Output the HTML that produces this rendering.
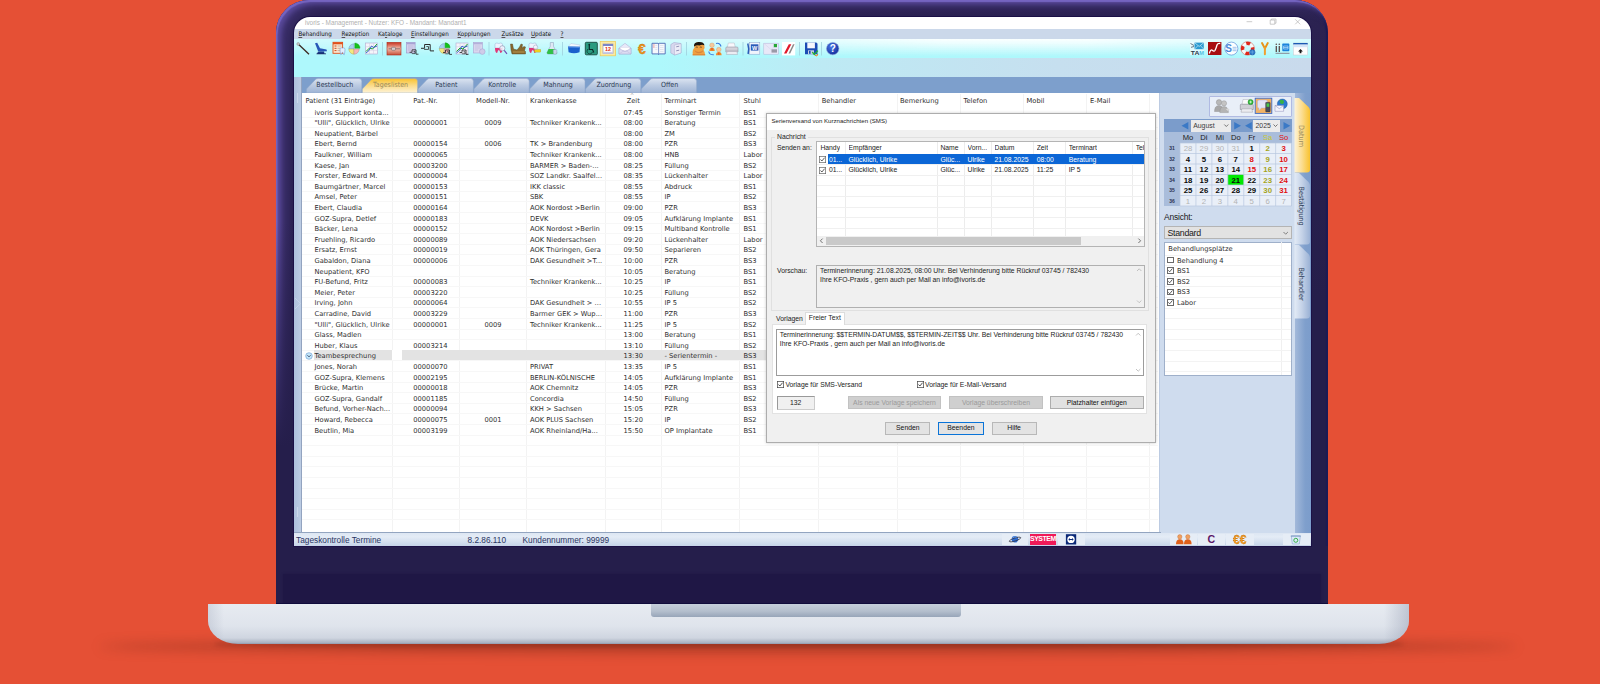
<!DOCTYPE html>
<html lang="de"><head><meta charset="utf-8"><title>ivoris - Management</title>
<style>
html,body{margin:0;padding:0}
body{width:1600px;height:684px;overflow:hidden;position:relative;background:#e55035;font-family:"Liberation Sans",sans-serif;}
.abs,.abs div{position:absolute;box-sizing:border-box;white-space:nowrap}
.t{font-family:"DejaVu Sans","Liberation Sans",sans-serif;font-size:6.72px;color:#303030;line-height:10px;height:10px}
.a{font-family:"Liberation Sans",sans-serif;font-size:6.8px;color:#222;line-height:10px;height:10px}
.c{text-align:center}
u{text-decoration-thickness:0.5px;text-underline-offset:0.6px;text-decoration-color:#555}
.m{font-family:"DejaVu Sans Condensed","DejaVu Sans",sans-serif;font-size:6.2px;color:#111}
</style></head><body>

<div class="abs" style="left:0;top:0;width:1600px;height:684px">
<div style="left:100px;top:640px;width:1416px;height:13px;border-radius:50%;background:rgba(120,40,24,.45);filter:blur(6px)"></div>
<div style="left:215px;top:641px;width:1188px;height:6px;border-radius:40%;background:rgba(110,35,20,.55);filter:blur(2.5px)"></div>
<div style="left:276.2px;top:0;width:1051.4px;height:604px;border-radius:33px 33px 0 0;background:linear-gradient(#2c2352 0,#2a2150 60px,#251e4b 300px);box-shadow:inset 1.5px 2px 1px #7564c0,inset 5px 4px 5px #5a4a9c,inset 13px 8px 10px #3b2f6b,inset -2px 0 1px #1c1b55"></div>
<div style="left:276.2px;top:80px;width:16.6px;height:470px;background:linear-gradient(rgba(37,30,75,0) 0,rgba(37,30,75,0) 30%,rgba(37,30,75,1) 78%)"></div>
<div style="left:276.2px;top:546px;width:1051.4px;height:59px;background:#251e4b"></div>
<div style="left:283px;top:574px;width:1038px;height:30px;background:#1f1745;box-shadow:0 0 2px #1f1745"></div>
<div style="left:276.2px;top:602.6px;width:1051.4px;height:1.2px;background:#100c3c"></div>
<div style="left:292.8px;top:15.8px;width:1019.4px;height:531px;border-radius:17px 17px 0 0;background:#1b1046"></div>
<div style="left:208px;top:603.6px;width:1200.6px;height:40.4px;border-radius:0 0 30px 30px / 0 0 23px 23px;background:linear-gradient(#e7ebf1 0,#dfe4ec 55%,#cfd5e0 85%,#a9b1c1 97%,#8f98ab 100%)"></div>
<div style="left:208px;top:603.6px;width:1200.6px;height:40.4px;border-radius:0 0 30px 30px / 0 0 23px 23px;background:linear-gradient(90deg,rgba(120,130,155,.2) 0,rgba(120,130,155,0) 16px,rgba(120,130,155,0) 1176px,rgba(120,130,155,.35) 100%)"></div>
<div style="left:651px;top:604px;width:310px;height:13px;border-radius:0 0 3px 3px;background:linear-gradient(#c6cfdb,#b4bfcd 55%,#97a5b9)"></div>
</div>
<div class="abs" style="left:0;top:0;width:1600px;height:684px;clip-path:inset(17px 289px 138px 294px round 16px 16px 0 0)">
<div style="left:0;top:0;width:1600px;height:684px;filter:blur(0.35px)">
<div style="left:294px;top:17px;width:1017px;height:529px;background:#cfdcee"></div>
<div style="left:294px;top:17px;width:1017px;height:12px;background:#fff"></div>
<div class="a" style="left:305px;top:17.5px;font-size:6.4px;color:#b0b0b0">ivoris - Management - Nutzer: KFO - Mandant: Mandant1</div>
<div style="left:294px;top:29px;width:1017px;height:10px;background:#cbd8ea"></div>
<div class="t m" style="left:298.4px;top:29px"><u>B</u>ehandlung</div>
<div class="t m" style="left:341.6px;top:29px"><u>R</u>ezeption</div>
<div class="t m" style="left:378px;top:29px">Ka<u>t</u>aloge</div>
<div class="t m" style="left:411px;top:29px"><u>E</u>instellungen</div>
<div class="t m" style="left:457.5px;top:29px"><u>K</u>opplungen</div>
<div class="t m" style="left:501.5px;top:29px"><u>Z</u>usätze</div>
<div class="t m" style="left:531px;top:29px"><u>U</u>pdate</div>
<div class="t m" style="left:560.5px;top:29px"><u>?</u></div>
<div style="left:294px;top:39px;width:1017px;height:38px;background:linear-gradient(90deg,#aef8fc 0,#aef8fc 36%,#bdeaf4 52%,#c6dfef 75%,#c9daec 100%)"></div>
<div style="left:294px;top:38.6px;width:1017px;height:19.4px;background:#aef8fc"></div>
<div style="left:294px;top:38.6px;width:1017px;height:19.4px;background:linear-gradient(rgba(255,255,255,.95) 0,rgba(255,255,255,.75) 25%,rgba(255,255,255,0) 92%);-webkit-mask-image:linear-gradient(90deg,rgba(0,0,0,.45) 0,rgba(0,0,0,.5) 40%,#000 64%,#000 78%,rgba(0,0,0,.55) 100%);mask-image:linear-gradient(90deg,rgba(0,0,0,.45) 0,rgba(0,0,0,.5) 40%,#000 64%,#000 78%,rgba(0,0,0,.55) 100%)"></div>
<svg style="position:absolute;left:294px;top:39px" width="1017" height="20" viewBox="294 39 1017 20">
<defs><linearGradient id="rdg" x1="0" y1="0" x2="0" y2="1"><stop offset="0" stop-color="#c8321e"/><stop offset="0.5" stop-color="#f0beae"/><stop offset="1" stop-color="#c85038"/></linearGradient><radialGradient id="hg" cx="0.4" cy="0.35" r="0.7"><stop offset="0" stop-color="#4a78e8"/><stop offset="1" stop-color="#102a98"/></radialGradient></defs>
<rect x="382.0" y="42" width="0.8" height="13.5" fill="#9fd0dc"/>
<rect x="488.6" y="42" width="0.8" height="13.5" fill="#9fd0dc"/>
<rect x="562.1" y="42" width="0.8" height="13.5" fill="#9fd0dc"/>
<rect x="686.1" y="42" width="0.8" height="13.5" fill="#9fd0dc"/>
<rect x="742.6" y="42" width="0.8" height="13.5" fill="#9fd0dc"/>
<rect x="799.0" y="42" width="0.8" height="13.5" fill="#9fd0dc"/>
<rect x="821.2" y="42" width="0.8" height="13.5" fill="#9fd0dc"/>
<path d="M298.2 44 L309 54.2" stroke="#3a2820" stroke-width="1.3"/><circle cx="298.2" cy="44" r="1.4" fill="#c8c8c8" stroke="#777" stroke-width="0.4"/>
<path d="M315 43.2 L317.2 42.8 L320 48.2 L326.5 49.6 L327 51.2 L320.5 51.6 L318 51 Z" fill="#2858b8"/><path d="M318 51.5 L324 51.5 L324.5 54 L317 54 Z" fill="#1a3a88"/><path d="M316.5 53.8 h9.5" stroke="#1a2a60" stroke-width="0.8"/>
<rect x="333" y="42.3" width="9.6" height="11" fill="#fbe8d0" stroke="#e0501a" stroke-width="0.9"/><rect x="333" y="42.3" width="9.6" height="2" fill="#e0501a"/><path d="M334.5 46 h2 M334.5 48.3 h2 M334.5 50.6 h2" stroke="#d04a18" stroke-width="1"/><path d="M337.5 46 h4 M337.5 48.3 h3 M337.5 50.6 h2.5" stroke="#b09080" stroke-width="0.6"/>
<path d="M340 49 Q340 47.8 341.3 47.8 Q342.4 48.4 343.5 47.8 Q345 47.8 345 49.5 Q345 52 344.2 54.8 Q343.4 55 343.2 52.8 Q342.5 52 341.8 52.8 Q341.6 55 340.8 54.8 Q340 52 340 49Z" fill="#e4eefc" stroke="#6a8ac8" stroke-width="0.5"/>
<path d="M354 49 V43.8 A5.2 5.2 0 0 0 348.8 49Z" fill="#a8d0f0" stroke="#6a8ab0" stroke-width="0.4"/><path d="M354 49 H348.8 A5.2 5.2 0 0 0 354 54.2Z" fill="#f5e880" stroke="#a09a50" stroke-width="0.4"/><path d="M354 49 V54.2 A5.2 5.2 0 0 0 359.2 49Z" fill="#f5b8b8" stroke="#b08080" stroke-width="0.4"/><path d="M354.8 48.2 H360.0 A5.2 5.2 0 0 0 354.8 43.0Z" fill="#12c418" stroke="#0a8a10" stroke-width="0.4"/>
<rect x="365.5" y="43" width="12" height="11" fill="#f4f4fa" stroke="#b0a8d0" stroke-width="0.6"/><path d="M365.5 46.7 h12 M365.5 50.4 h12 M369.5 43 v11 M373.5 43 v11" stroke="#d0c8e0" stroke-width="0.5"/><path d="M366.0 51.5 L369.5 48 L372.5 49 L377.0 44" fill="none" stroke="#18a828" stroke-width="1"/><path d="M366.0 53 L369.0 50.5 L371.5 46 L373.5 47.5 L377.0 46" fill="none" stroke="#2858c8" stroke-width="0.9"/>
<rect x="387" y="42.4" width="14" height="12.6" fill="url(#rdg)" stroke="#b02a18" stroke-width="0.6"/><rect x="391.5" y="47.3" width="4" height="3" rx="0.8" fill="#d8d0d0" stroke="#6a5a5a" stroke-width="0.5"/><path d="M388.5 48.8 h3 M395.5 48.8 h4.5" stroke="#6a5050" stroke-width="0.7"/>
<rect x="406.5" y="42.5" width="8.6" height="10.5" fill="#d4d0ec" stroke="#9a94c8" stroke-width="0.6"/><rect x="406.5" y="42.5" width="8.6" height="1.8" fill="#a8a2d4"/><path d="M408 46 h5.5 M408 48 h5.5 M408 50 h3" stroke="#a8a4cc" stroke-width="0.5"/>
<path d="M409.55 52.290000000000006 h2.4699999999999998 v-2.4699999999999998 h3.9899999999999998 v4.369999999999999 h2.4699999999999998" fill="none" stroke="#222" stroke-width="0.8075"/><path d="M413.54 51.53 h1.52 v2.09 h-3.23" fill="none" stroke="#222" stroke-width="0.6649999999999999"/>
<path d="M421 48.3 h3.6 v-3.8 h5.6 v6.4 h3.8" fill="none" stroke="#2a2a2a" stroke-width="1"/><path d="M426.3 46.6 h2.2 v2.8 h-4.4" fill="none" stroke="#2a2a2a" stroke-width="0.8"/>
<path d="M444.3 48.6 V43.6 A5 5 0 0 0 439.3 48.6Z" fill="#a8d0f0" stroke="#6a8ab0" stroke-width="0.4"/><path d="M444.3 48.6 H439.3 A5 5 0 0 0 444.3 53.6Z" fill="#f5e880" stroke="#a09a50" stroke-width="0.4"/><path d="M444.3 48.6 V53.6 A5 5 0 0 0 449.3 48.6Z" fill="#f5b8b8" stroke="#b08080" stroke-width="0.4"/><path d="M445.1 47.800000000000004 H450.1 A5 5 0 0 0 445.1 42.800000000000004Z" fill="#12c418" stroke="#0a8a10" stroke-width="0.4"/>
<path d="M443.05 52.489999999999995 h2.4699999999999998 v-2.4699999999999998 h3.9899999999999998 v4.369999999999999 h2.4699999999999998" fill="none" stroke="#222" stroke-width="0.8075"/><path d="M447.04 51.73 h1.52 v2.09 h-3.23" fill="none" stroke="#222" stroke-width="0.6649999999999999"/>
<rect x="456" y="43" width="12" height="11" fill="#f4f4fa" stroke="#b0a8d0" stroke-width="0.6"/><path d="M456 46.7 h12 M456 50.4 h12 M460 43 v11 M464 43 v11" stroke="#d0c8e0" stroke-width="0.5"/><path d="M456.5 51.5 L460 48 L463 49 L467.5 44" fill="none" stroke="#18a828" stroke-width="1"/><path d="M456.5 53 L459.5 50.5 L462 46 L464 47.5 L467.5 46" fill="none" stroke="#2858c8" stroke-width="0.9"/>
<path d="M459.55 52.489999999999995 h2.4699999999999998 v-2.4699999999999998 h3.9899999999999998 v4.369999999999999 h2.4699999999999998" fill="none" stroke="#222" stroke-width="0.8075"/><path d="M463.54 51.73 h1.52 v2.09 h-3.23" fill="none" stroke="#222" stroke-width="0.6649999999999999"/>
<rect x="473.4" y="42.5" width="9" height="10.5" fill="#d9d6ee" stroke="#aaa6d2" stroke-width="0.6"/><rect x="473.4" y="42.5" width="9" height="1.8" fill="#b4b0da"/><path d="M475 46 h5.5 M475 48 h5.5 M475 50 h3" stroke="#b4b0d4" stroke-width="0.5"/><circle cx="482.3" cy="51.6" r="2.8" fill="#cfcce8" stroke="#a29ecf" stroke-width="0.5"/>
<path d="M495 44.5 Q495 43 496.875 43 Q498.75 44 500.625 43 Q502.5 43 502.5 44.5 V48.0 H495Z" fill="#eef4ff" stroke="#8aa0c8" stroke-width="0.4"/><path d="M495 48.0 H502.5 Q502.5 53 500.4 53 Q499.5 50.0 498.75 50.0 Q498.0 50.0 497.1 53 Q495 53 495 48.0Z" fill="#e03878"/>
<circle cx="502.3" cy="48.3" r="2.6" fill="#f4f8ff" fill-opacity="0.8" stroke="#8a8aa8" stroke-width="0.6"/><path d="M504.2 50.4 L507 53.8" stroke="#6a4ab0" stroke-width="1.1"/>
<path d="M510.5 44 L512.5 44 L513.5 49 L517 50 L519.5 47 L521 44 L522.5 44.5 L522 48 L524 46.5 L525.5 47 L524.5 50.5 L525.5 51.5 L525.5 54 L512 54 L511 50Z" fill="#8a6a2e" stroke="#4a3818" stroke-width="0.4"/><path d="M513 52 h11.5" stroke="#c8a860" stroke-width="0.7"/>
<path d="M529 44.5 Q529 43 530.875 43 Q532.75 44 534.625 43 Q536.5 43 536.5 44.5 V48.0 H529Z" fill="#eef4ff" stroke="#8aa0c8" stroke-width="0.4"/><path d="M529 48.0 H536.5 Q536.5 53 534.4 53 Q533.5 50.0 532.75 50.0 Q532.0 50.0 531.1 53 Q529 53 529 48.0Z" fill="#e03878"/>
<rect x="534.5" y="49.5" width="6.2" height="2.6" fill="#f0d020" stroke="#a08a10" stroke-width="0.3"/><circle cx="535.6" cy="47.2" r="2.2" fill="#f4f8ff" fill-opacity="0.8" stroke="#9a9ab8" stroke-width="0.5"/>
<path d="M550.3 42.5 h3.2 v3.8 l3.3 6.2 q0.4 1.6 -1.4 1.6 h-7 q-1.8 0 -1.4 -1.6 l3.3 -6.2Z" fill="#dfe8f4" stroke="#8a9ab8" stroke-width="0.5"/><path d="M548.6 49 h6.6 l1.6 3.5 q0.4 1.6 -1.4 1.6 h-7 q-1.8 0 -1.4 -1.6Z" fill="#30c048"/><rect x="553.3" y="49.5" width="3.6" height="4.6" rx="1" fill="#c8d4ec" stroke="#8a9ac0" stroke-width="0.4"/>
<path d="M568.3 46.5 L571 43.5 L580 45 L580 47Z" fill="#f4f8ff" stroke="#a8b8d8" stroke-width="0.4"/><path d="M568 46.5 L580 46.8 L579.5 52.3 Q574 54.3 568.6 52.3Z" fill="#1a60cc"/><path d="M568.3 47 L579.8 47.3" stroke="#6aa0f0" stroke-width="0.8"/>
<rect x="585.3" y="42.3" width="12" height="12.5" rx="1" fill="#2a9a80" stroke="#1a4a40" stroke-width="0.9"/><path d="M589.3 44.5 v5 h3.2 l1.3 3" fill="none" stroke="#0a2a28" stroke-width="1.2"/><circle cx="589.3" cy="44.6" r="0.9" fill="#0a2a28"/><path d="M588 49 a2.8 2.8 0 1 0 4.5 3" fill="none" stroke="#0a2a28" stroke-width="0.7"/>
<rect x="600.2" y="41.6" width="15.4" height="14.2" fill="#fbeaa4" stroke="#f0c850" stroke-width="0.7"/><rect x="603" y="44" width="10" height="9.6" fill="#fff" stroke="#8a8ab8" stroke-width="0.6"/><rect x="603" y="44" width="10" height="2" fill="#7a86c8"/><rect x="603" y="51.8" width="10" height="1.8" fill="#c8cce8"/>
<text x="608" y="51.2" font-family="Liberation Sans,sans-serif" font-size="5.4" font-weight="bold" fill="#e02a10" text-anchor="middle">12</text>
<path d="M619 48 L625 43.3 L631 48 V54 H619Z" fill="#e8e8f8" stroke="#a8a8d0" stroke-width="0.5"/><path d="M620.3 47.5 h9.4 v3 h-9.4Z" fill="#fff" stroke="#c8c8e0" stroke-width="0.3"/><path d="M619 48.3 L625 51.8 L631 48.3 V54 H619Z" fill="#dcdcf2" stroke="#a8a8d0" stroke-width="0.5"/><path d="M619 54 L623.8 50.8 M631 54 L626.2 50.8" stroke="#b0b0d4" stroke-width="0.4"/>
<text x="641.8" y="54" font-family="Liberation Sans,sans-serif" font-size="14" font-weight="bold" fill="#f09418" stroke="#c06a08" stroke-width="0.3" text-anchor="middle">€</text>
<path d="M652 43.3 h6 q0.6 0 0.6 0.8 q0 -0.8 0.6 -0.8 h6 v10.6 h-6 q-0.6 0 -0.6 0.6 q0 -0.6 -0.6 -0.6 h-6Z" fill="#f6f8fc" stroke="#4a6ab4" stroke-width="0.9"/><path d="M658.6 44 v10.3" stroke="#4a6ab4" stroke-width="0.7"/><path d="M653.3 45 h1.2 M653.3 47 h1.2" stroke="#e03030" stroke-width="0.7"/><path d="M655.3 45.5 h2 M655.3 47.5 h2 M655.3 49.5 h2 M660 45.5 h3.5 M660 47.5 h3.5 M660 49.5 h3.5 M660 51.5 h3.5" stroke="#c0c8dc" stroke-width="0.4"/>
<path d="M670.8 44.5 L674 42.5 L681 43.5 V53 L674.5 55 L670.8 53Z" fill="#d8d8ee" stroke="#a0a0c8" stroke-width="0.5"/><path d="M674.3 45 L681 43.7 V53 L674.5 55Z" fill="#ececf8" stroke="#a0a0c8" stroke-width="0.4"/><path d="M676.2 46.8 l3 -0.6 M676.2 50.8 l3 -0.6" stroke="#8888b0" stroke-width="0.9"/>
<path d="M692.8 54.5 Q692 50 694.5 47.5 Q693.5 43 698 42.3 Q703.5 41.8 704.3 45.5 Q705.3 48 703.5 50 Q705.3 52.5 705 54.5Z" fill="#f0a040"/><path d="M694 46.5 Q693.5 42.3 698.3 42 Q703.8 41.6 704.5 45.3 Q702 44.3 699.5 45.5 Q697 44.5 694 46.5Z" fill="#1a1410"/><path d="M695.8 47.3 q1 -0.6 2 0 M699.8 47.3 q1 -0.6 2 0" stroke="#222" stroke-width="0.6" fill="none"/><path d="M694.5 50 Q698.5 54 703.5 50 Q702.5 53.3 698.8 53.3 Q695.5 53.3 694.5 50Z" fill="#d8843a"/><path d="M692.6 54.8 h12.6" stroke="#e87a1a" stroke-width="1.2"/>
<circle cx="712" cy="45.2" r="2.3" fill="#f6c89a" stroke="#c08850" stroke-width="0.3"/><path d="M709.3 51 q0 -3.3 2.7 -3.3 q2.7 0 2.7 3.3Z" fill="#f08a2a"/><circle cx="718.8" cy="49.6" r="2.3" fill="#f6c89a" stroke="#c08850" stroke-width="0.3"/><path d="M716 55.3 q0 -3.3 2.8 -3.3 q2.8 0 2.8 3.3Z" fill="#f08a2a"/><path d="M716 43.5 q4 -1 5 3" fill="none" stroke="#3a7ae0" stroke-width="1.1"/><path d="M708.8 51.5 q0.5 3.5 5 3.3" fill="none" stroke="#3a7ae0" stroke-width="1.1"/><path d="M712 48 v2.3 M718.8 52.5 v2.3" stroke="#e02020" stroke-width="0.6"/>
<path d="M728.3 43 h6 l1 4.5 h-8Z" fill="#f8f8fc" stroke="#a8a8b8" stroke-width="0.4"/><path d="M725.8 48 q0 -1 1 -1 h10.2 q1 0 1 1 v4 h-12.2Z" fill="#d4d4dc" stroke="#8a8a98" stroke-width="0.5"/><path d="M727.2 51.5 h9.6 l0.8 3 h-11.2Z" fill="#ececf2" stroke="#9a9aa8" stroke-width="0.4"/><path d="M726 50.3 h12" stroke="#a0a0ac" stroke-width="0.5"/>
<rect x="749.3" y="42.6" width="10.5" height="11.6" fill="#f0f4fc" stroke="#8aa0cc" stroke-width="0.5"/><rect x="750.8" y="44.3" width="7.6" height="6.3" fill="#2a5cb8"/><text x="754.6" y="49.8" font-family="Liberation Sans,sans-serif" font-size="5.6" font-weight="bold" fill="#fff" text-anchor="middle">W</text><path d="M747.8 43.5 q1.6 5 0.3 10.5" stroke="#2a5cb8" stroke-width="1.5" fill="none"/>
<rect x="763.8" y="43.2" width="14.6" height="11" fill="#e8e8f8" stroke="#b4b4d8" stroke-width="0.5"/><path d="M764 43.5 L771 49.5 L778.2 43.5" fill="none" stroke="#d0d0e8" stroke-width="0.5"/><rect x="773.8" y="44" width="3.2" height="3.2" fill="#28a838"/><rect x="771.5" y="49.3" width="5.5" height="3.3" fill="#9a9aa8"/>
<rect x="782" y="42" width="13.2" height="13.4" fill="#fff"/><path d="M784 53.5 L788.8 44.3 H791.3 L786.5 53.5Z" fill="#e0182a"/><path d="M788.5 53.5 L793 44.3 H794.6 L790.2 53.5Z" fill="#8a8a8a"/>
<path d="M805 42.5 h11.3 l1.2 1.2 v10.6 h-12.5Z" fill="#1a4cb4"/><rect x="807.3" y="42.5" width="7.6" height="5.8" fill="#f4f6fc"/><rect x="808" y="50.3" width="6" height="4" fill="#c8d0e4"/><rect x="809" y="50.8" width="1.6" height="3" fill="#1a4cb4"/><path d="M812.3 52 l2 2.6 l3.6 -4" fill="none" stroke="#28b030" stroke-width="1.3"/><path d="M815 55.2 l1.8 0.8 l1 -2" fill="none" stroke="#f08020" stroke-width="1"/>
<circle cx="832.7" cy="48.6" r="6.2" fill="url(#hg)" stroke="#8aa0d8" stroke-width="0.6"/><text x="832.7" y="52.2" font-family="Liberation Sans,sans-serif" font-size="10" font-weight="bold" fill="#fff" text-anchor="middle">?</text>
<rect x="1190" y="42" width="14" height="13" fill="#f4fbfd" fill-opacity="0.6"/><rect x="1194.5" y="42.6" width="9.3" height="6.6" fill="#2a9ad0"/><path d="M1194.5 42.6 L1199.2 46.5 L1203.8 42.6 M1194.5 49.2 L1198 45.6 M1203.8 49.2 L1200.4 45.6" stroke="#e8f6fc" stroke-width="0.6" fill="none"/><path d="M1190.5 43.5 l3.5 2 M1191 47.3 l3 -0.8" stroke="#5a6a78" stroke-width="0.9"/>
<text x="1190.8" y="55" font-family="Liberation Sans,sans-serif" font-size="5.6" font-weight="bold" fill="#2a3a48" textLength="8.6" lengthAdjust="spacingAndGlyphs">TA</text><text x="1199.3" y="55" font-family="Liberation Sans,sans-serif" font-size="5.6" font-weight="bold" fill="#4ac0e0">M</text>
<rect x="1208" y="42" width="13.4" height="13" fill="#a80e10"/><path d="M1209.3 53.5 q1.3 -4.5 3 -3.3 q1.8 1.8 2.8 0 q1 -2 2 -5.5 q0.8 -1.8 3.2 -1.2" fill="none" stroke="#fff" stroke-width="1.3"/>
<circle cx="1231.4" cy="48.6" r="6.5" fill="#fdfeff" stroke="#5a92da" stroke-width="0.7"/><text x="1228.6" y="52.3" font-family="Liberation Sans,sans-serif" font-size="10" font-weight="bold" fill="#4a8ad8" text-anchor="middle">S</text><path d="M1232.6 47.3 h4 M1232.6 49 h4 M1232.6 50.7 h4" stroke="#7aaae4" stroke-width="0.7"/>
<circle cx="1247.6" cy="48.4" r="5" fill="none" stroke="#f8f8f8" stroke-width="3.4"/><circle cx="1247.6" cy="48.4" r="5" fill="none" stroke="#e0281a" stroke-width="3.4" stroke-dasharray="3.93 3.93" stroke-dashoffset="1.96"/><circle cx="1247.6" cy="48.4" r="6.8" fill="none" stroke="#c82818" stroke-width="0.4"/><circle cx="1252.3" cy="52.3" r="2.8" fill="#2a78c8" stroke="#1a4a98" stroke-width="0.4"/><path d="M1250 52 h4.6 M1252.3 49.8 v5" stroke="#9ac8f0" stroke-width="0.4"/>
<path d="M1262 43 l2.9 5.5 l2.9 -5.5" fill="none" stroke="#e8941a" stroke-width="1.9" stroke-linecap="round"/><path d="M1264.9 48 v6.3" stroke="#f0a030" stroke-width="2" stroke-linecap="round"/>
<path d="M1276.3 46 v6 M1279.3 46 v6" stroke="#5a4a48" stroke-width="1.3"/><circle cx="1276.3" cy="44.3" r="0.8" fill="#5a4a48"/><circle cx="1279.3" cy="44.3" r="0.8" fill="#5a4a48"/><rect x="1282.3" y="43.6" width="7" height="7.6" rx="0.6" fill="#1a84dc"/><path d="M1283.6 46 h4.4 v3 h-4.4Z M1283.6 47.5 h4.4" fill="none" stroke="#d0ecff" stroke-width="0.6"/><path d="M1275.5 53.3 h14" stroke="#7a6a78" stroke-width="0.8"/>
<rect x="1293.3" y="43" width="14.4" height="12" fill="#fdfdfd" stroke="#c4c8d0" stroke-width="0.5"/><rect x="1293.3" y="43" width="14.4" height="1.6" fill="#1a5ab4"/><rect x="1293.3" y="44.6" width="14.4" height="2.6" fill="#d4e6f8"/><path d="M1300.5 49 l2.4 2.4 h-1.5 v1.8 h-1.8 v-1.8 h-1.5Z" fill="#1a1a1a"/>
</svg>
<div style="left:294px;top:77px;width:1017px;height:16px;background:#7d9fcc"></div>
<svg style="position:absolute;left:294px;top:77px" width="1017" height="16" viewBox="294 77 1017 16"><defs><linearGradient id="tg" x1="0" y1="0" x2="0" y2="1"><stop offset="0" stop-color="#dbe4f1"/><stop offset="0.45" stop-color="#bccbe2"/><stop offset="1" stop-color="#9db3d4"/></linearGradient><linearGradient id="ta" x1="0" y1="0" x2="0" y2="1"><stop offset="0" stop-color="#f9c22e"/><stop offset="0.5" stop-color="#fbdc8c"/><stop offset="1" stop-color="#fdf3d8"/></linearGradient></defs>
<path d="M306.5 93 L306.5 89 L315.5 79.5 Q316.5 78.5 318.5 78.5 L358.8 78.5 Q361.8 78.5 361.8 81.5 L361.8 93 Z" fill="url(#tg)" stroke="#8ea6c9" stroke-width="0.5"/>
<path d="M362.3 93 L362.3 89 L371.3 79.5 Q372.3 78.5 374.3 78.5 L414.6 78.5 Q417.6 78.5 417.6 81.5 L417.6 93 Z" fill="url(#ta)" stroke="#8ea6c9" stroke-width="0.5"/>
<path d="M418.1 93 L418.1 89 L427.1 79.5 Q428.1 78.5 430.1 78.5 L470.4 78.5 Q473.4 78.5 473.4 81.5 L473.4 93 Z" fill="url(#tg)" stroke="#8ea6c9" stroke-width="0.5"/>
<path d="M473.9 93 L473.9 89 L482.9 79.5 Q483.9 78.5 485.9 78.5 L526.2 78.5 Q529.2 78.5 529.2 81.5 L529.2 93 Z" fill="url(#tg)" stroke="#8ea6c9" stroke-width="0.5"/>
<path d="M529.7 93 L529.7 89 L538.7 79.5 Q539.7 78.5 541.7 78.5 L582.0 78.5 Q585.0 78.5 585.0 81.5 L585.0 93 Z" fill="url(#tg)" stroke="#8ea6c9" stroke-width="0.5"/>
<path d="M585.5 93 L585.5 89 L594.5 79.5 Q595.5 78.5 597.5 78.5 L637.8 78.5 Q640.8 78.5 640.8 81.5 L640.8 93 Z" fill="url(#tg)" stroke="#8ea6c9" stroke-width="0.5"/>
<path d="M641.3 93 L641.3 89 L650.3 79.5 Q651.3 78.5 653.3 78.5 L693.6 78.5 Q696.6 78.5 696.6 81.5 L696.6 93 Z" fill="url(#tg)" stroke="#8ea6c9" stroke-width="0.5"/>
</svg>
<div class="t m c" style="left:307.3px;top:80.4px;width:55px;font-size:7.05px;color:#2c3a55">Bestellbuch</div>
<div class="t m c" style="left:363.1px;top:80.4px;width:55px;font-size:7.05px;color:#9a8a5a">Tageslisten</div>
<div class="t m c" style="left:418.9px;top:80.4px;width:55px;font-size:7.05px;color:#2c3a55">Patient</div>
<div class="t m c" style="left:474.7px;top:80.4px;width:55px;font-size:7.05px;color:#2c3a55">Kontrolle</div>
<div class="t m c" style="left:530.5px;top:80.4px;width:55px;font-size:7.05px;color:#2c3a55">Mahnung</div>
<div class="t m c" style="left:586.3px;top:80.4px;width:55px;font-size:7.05px;color:#2c3a55">Zuordnung</div>
<div class="t m c" style="left:642.1px;top:80.4px;width:55px;font-size:7.05px;color:#2c3a55">Offen</div>
<div style="left:294px;top:77px;width:8px;height:456px;background:linear-gradient(90deg,#adc0dc,#bccce3);border-right:0.7px solid #93a4c0"></div>
<div style="left:302px;top:93px;width:858px;height:439px;background:#fff"></div>
<div style="left:391.5px;top:94px;width:1px;height:438px;background:#f3f3f3"></div>
<div style="left:459.0px;top:94px;width:1px;height:438px;background:#f3f3f3"></div>
<div style="left:526.0px;top:94px;width:1px;height:438px;background:#f3f3f3"></div>
<div style="left:605.0px;top:94px;width:1px;height:438px;background:#f3f3f3"></div>
<div style="left:660.5px;top:94px;width:1px;height:438px;background:#f3f3f3"></div>
<div style="left:739.2px;top:94px;width:1px;height:438px;background:#f3f3f3"></div>
<div style="left:817.5px;top:94px;width:1px;height:438px;background:#f3f3f3"></div>
<div style="left:896.5px;top:94px;width:1px;height:438px;background:#f3f3f3"></div>
<div style="left:959.5px;top:94px;width:1px;height:438px;background:#f3f3f3"></div>
<div style="left:1022.5px;top:94px;width:1px;height:438px;background:#f3f3f3"></div>
<div style="left:1085.5px;top:94px;width:1px;height:438px;background:#f3f3f3"></div>
<div style="left:1149.0px;top:94px;width:1px;height:438px;background:#f3f3f3"></div>
<div style="left:302px;top:116.50px;width:856px;height:1px;background:#f7f7f7"></div>
<div style="left:302px;top:127.10px;width:856px;height:1px;background:#f7f7f7"></div>
<div style="left:302px;top:137.70px;width:856px;height:1px;background:#f7f7f7"></div>
<div style="left:302px;top:148.30px;width:856px;height:1px;background:#f7f7f7"></div>
<div style="left:302px;top:158.90px;width:856px;height:1px;background:#f7f7f7"></div>
<div style="left:302px;top:169.50px;width:856px;height:1px;background:#f7f7f7"></div>
<div style="left:302px;top:180.10px;width:856px;height:1px;background:#f7f7f7"></div>
<div style="left:302px;top:190.70px;width:856px;height:1px;background:#f7f7f7"></div>
<div style="left:302px;top:201.30px;width:856px;height:1px;background:#f7f7f7"></div>
<div style="left:302px;top:211.90px;width:856px;height:1px;background:#f7f7f7"></div>
<div style="left:302px;top:222.50px;width:856px;height:1px;background:#f7f7f7"></div>
<div style="left:302px;top:233.10px;width:856px;height:1px;background:#f7f7f7"></div>
<div style="left:302px;top:243.70px;width:856px;height:1px;background:#f7f7f7"></div>
<div style="left:302px;top:254.30px;width:856px;height:1px;background:#f7f7f7"></div>
<div style="left:302px;top:264.90px;width:856px;height:1px;background:#f7f7f7"></div>
<div style="left:302px;top:275.50px;width:856px;height:1px;background:#f7f7f7"></div>
<div style="left:302px;top:286.10px;width:856px;height:1px;background:#f7f7f7"></div>
<div style="left:302px;top:296.70px;width:856px;height:1px;background:#f7f7f7"></div>
<div style="left:302px;top:307.30px;width:856px;height:1px;background:#f7f7f7"></div>
<div style="left:302px;top:317.90px;width:856px;height:1px;background:#f7f7f7"></div>
<div style="left:302px;top:328.50px;width:856px;height:1px;background:#f7f7f7"></div>
<div style="left:302px;top:339.10px;width:856px;height:1px;background:#f7f7f7"></div>
<div style="left:302px;top:349.70px;width:856px;height:1px;background:#f7f7f7"></div>
<div style="left:302px;top:360.30px;width:856px;height:1px;background:#f7f7f7"></div>
<div style="left:302px;top:370.90px;width:856px;height:1px;background:#f7f7f7"></div>
<div style="left:302px;top:381.50px;width:856px;height:1px;background:#f7f7f7"></div>
<div style="left:302px;top:392.10px;width:856px;height:1px;background:#f7f7f7"></div>
<div style="left:302px;top:402.70px;width:856px;height:1px;background:#f7f7f7"></div>
<div style="left:302px;top:413.30px;width:856px;height:1px;background:#f7f7f7"></div>
<div style="left:302px;top:423.90px;width:856px;height:1px;background:#f7f7f7"></div>
<div style="left:302px;top:434.50px;width:856px;height:1px;background:#f7f7f7"></div>
<div style="left:302px;top:445.10px;width:856px;height:1px;background:#f7f7f7"></div>
<div style="left:302px;top:455.70px;width:856px;height:1px;background:#f7f7f7"></div>
<div style="left:302px;top:466.30px;width:856px;height:1px;background:#f7f7f7"></div>
<div style="left:302px;top:476.90px;width:856px;height:1px;background:#f7f7f7"></div>
<div style="left:302px;top:487.50px;width:856px;height:1px;background:#f7f7f7"></div>
<div style="left:302px;top:498.10px;width:856px;height:1px;background:#f7f7f7"></div>
<div style="left:302px;top:508.70px;width:856px;height:1px;background:#f7f7f7"></div>
<div style="left:302px;top:519.30px;width:856px;height:1px;background:#f7f7f7"></div>
<div class="t" style="left:305.5px;top:96.1px">Patient (31 Einträge)</div>
<div class="t c" style="left:392px;top:96.1px;width:67px">Pat.-Nr.</div>
<div class="t c" style="left:459.5px;top:96.1px;width:67px">Modell-Nr.</div>
<div class="t" style="left:530px;top:96.1px">Krankenkasse</div>
<div class="t c" style="left:605.5px;top:96.1px;width:55.5px">Zeit</div>
<div class="t" style="left:664.5px;top:96.1px">Terminart</div>
<div class="t" style="left:743.5px;top:96.1px">Stuhl</div>
<div class="t" style="left:821.7px;top:96.1px">Behandler</div>
<div class="t" style="left:900px;top:96.1px">Bemerkung</div>
<div class="t" style="left:963.5px;top:96.1px">Telefon</div>
<div class="t" style="left:1026.5px;top:96.1px">Mobil</div>
<div class="t" style="left:1090px;top:96.1px">E-Mail</div>
<div class="t" style="left:630px;top:90px;font-size:5px;color:#999">^</div>
<div class="t" style="left:314.5px;top:107.60px">ivoris Support konta...</div>
<div class="t c" style="left:605.5px;top:107.60px;width:55.5px">07:45</div>
<div class="t" style="left:664.5px;top:107.60px">Sonstiger Termin</div>
<div class="t" style="left:743.5px;top:107.60px">BS1</div>
<div class="t" style="left:314.5px;top:118.20px">"Ulli", Glücklich, Ulrike</div>
<div class="t" style="left:413.3px;top:118.20px">00000001</div>
<div class="t c" style="left:459.5px;top:118.20px;width:67px">0009</div>
<div class="t" style="left:530px;top:118.20px">Techniker Krankenk...</div>
<div class="t c" style="left:605.5px;top:118.20px;width:55.5px">08:00</div>
<div class="t" style="left:664.5px;top:118.20px">Beratung</div>
<div class="t" style="left:743.5px;top:118.20px">BS1</div>
<div class="t" style="left:314.5px;top:128.80px">Neupatient, Bärbel</div>
<div class="t c" style="left:605.5px;top:128.80px;width:55.5px">08:00</div>
<div class="t" style="left:664.5px;top:128.80px">ZM</div>
<div class="t" style="left:743.5px;top:128.80px">BS2</div>
<div class="t" style="left:314.5px;top:139.40px">Ebert, Bernd</div>
<div class="t" style="left:413.3px;top:139.40px">00000154</div>
<div class="t c" style="left:459.5px;top:139.40px;width:67px">0006</div>
<div class="t" style="left:530px;top:139.40px">TK > Brandenburg</div>
<div class="t c" style="left:605.5px;top:139.40px;width:55.5px">08:00</div>
<div class="t" style="left:664.5px;top:139.40px">PZR</div>
<div class="t" style="left:743.5px;top:139.40px">BS3</div>
<div class="t" style="left:314.5px;top:150.00px">Faulkner, William</div>
<div class="t" style="left:413.3px;top:150.00px">00000065</div>
<div class="t" style="left:530px;top:150.00px">Techniker Krankenk...</div>
<div class="t c" style="left:605.5px;top:150.00px;width:55.5px">08:00</div>
<div class="t" style="left:664.5px;top:150.00px">HNB</div>
<div class="t" style="left:743.5px;top:150.00px">Labor</div>
<div class="t" style="left:314.5px;top:160.60px">Kaese, Jan</div>
<div class="t" style="left:413.3px;top:160.60px">00003200</div>
<div class="t" style="left:530px;top:160.60px">BARMER > Baden-...</div>
<div class="t c" style="left:605.5px;top:160.60px;width:55.5px">08:25</div>
<div class="t" style="left:664.5px;top:160.60px">Füllung</div>
<div class="t" style="left:743.5px;top:160.60px">BS2</div>
<div class="t" style="left:314.5px;top:171.20px">Forster, Edward M.</div>
<div class="t" style="left:413.3px;top:171.20px">00000004</div>
<div class="t" style="left:530px;top:171.20px">SOZ Landkr. Saalfel...</div>
<div class="t c" style="left:605.5px;top:171.20px;width:55.5px">08:35</div>
<div class="t" style="left:664.5px;top:171.20px">Lückenhalter</div>
<div class="t" style="left:743.5px;top:171.20px">Labor</div>
<div class="t" style="left:314.5px;top:181.80px">Baumgärtner, Marcel</div>
<div class="t" style="left:413.3px;top:181.80px">00000153</div>
<div class="t" style="left:530px;top:181.80px">IKK classic</div>
<div class="t c" style="left:605.5px;top:181.80px;width:55.5px">08:55</div>
<div class="t" style="left:664.5px;top:181.80px">Abdruck</div>
<div class="t" style="left:743.5px;top:181.80px">BS1</div>
<div class="t" style="left:314.5px;top:192.40px">Amsel, Peter</div>
<div class="t" style="left:413.3px;top:192.40px">00000151</div>
<div class="t" style="left:530px;top:192.40px">SBK</div>
<div class="t c" style="left:605.5px;top:192.40px;width:55.5px">08:55</div>
<div class="t" style="left:664.5px;top:192.40px">IP</div>
<div class="t" style="left:743.5px;top:192.40px">BS2</div>
<div class="t" style="left:314.5px;top:203.00px">Ebert, Claudia</div>
<div class="t" style="left:413.3px;top:203.00px">00000164</div>
<div class="t" style="left:530px;top:203.00px">AOK Nordost >Berlin</div>
<div class="t c" style="left:605.5px;top:203.00px;width:55.5px">09:00</div>
<div class="t" style="left:664.5px;top:203.00px">PZR</div>
<div class="t" style="left:743.5px;top:203.00px">BS3</div>
<div class="t" style="left:314.5px;top:213.60px">GOZ-Supra, Detlef</div>
<div class="t" style="left:413.3px;top:213.60px">00000183</div>
<div class="t" style="left:530px;top:213.60px">DEVK</div>
<div class="t c" style="left:605.5px;top:213.60px;width:55.5px">09:05</div>
<div class="t" style="left:664.5px;top:213.60px">Aufklärung Implante</div>
<div class="t" style="left:743.5px;top:213.60px">BS1</div>
<div class="t" style="left:314.5px;top:224.20px">Bäcker, Lena</div>
<div class="t" style="left:413.3px;top:224.20px">00000152</div>
<div class="t" style="left:530px;top:224.20px">AOK Nordost >Berlin</div>
<div class="t c" style="left:605.5px;top:224.20px;width:55.5px">09:15</div>
<div class="t" style="left:664.5px;top:224.20px">Multiband Kontrolle</div>
<div class="t" style="left:743.5px;top:224.20px">BS1</div>
<div class="t" style="left:314.5px;top:234.80px">Fruehling, Ricardo</div>
<div class="t" style="left:413.3px;top:234.80px">00000089</div>
<div class="t" style="left:530px;top:234.80px">AOK Niedersachsen</div>
<div class="t c" style="left:605.5px;top:234.80px;width:55.5px">09:20</div>
<div class="t" style="left:664.5px;top:234.80px">Lückenhalter</div>
<div class="t" style="left:743.5px;top:234.80px">Labor</div>
<div class="t" style="left:314.5px;top:245.40px">Ersatz, Ernst</div>
<div class="t" style="left:413.3px;top:245.40px">00000019</div>
<div class="t" style="left:530px;top:245.40px">AOK Thüringen, Gera</div>
<div class="t c" style="left:605.5px;top:245.40px;width:55.5px">09:50</div>
<div class="t" style="left:664.5px;top:245.40px">Separieren</div>
<div class="t" style="left:743.5px;top:245.40px">BS2</div>
<div class="t" style="left:314.5px;top:256.00px">Gabaldon, Diana</div>
<div class="t" style="left:413.3px;top:256.00px">00000006</div>
<div class="t" style="left:530px;top:256.00px">DAK Gesundheit >T...</div>
<div class="t c" style="left:605.5px;top:256.00px;width:55.5px">10:00</div>
<div class="t" style="left:664.5px;top:256.00px">PZR</div>
<div class="t" style="left:743.5px;top:256.00px">BS3</div>
<div class="t" style="left:314.5px;top:266.60px">Neupatient, KFO</div>
<div class="t c" style="left:605.5px;top:266.60px;width:55.5px">10:05</div>
<div class="t" style="left:664.5px;top:266.60px">Beratung</div>
<div class="t" style="left:743.5px;top:266.60px">BS1</div>
<div class="t" style="left:314.5px;top:277.20px">FU-Befund, Fritz</div>
<div class="t" style="left:413.3px;top:277.20px">00000083</div>
<div class="t" style="left:530px;top:277.20px">Techniker Krankenk...</div>
<div class="t c" style="left:605.5px;top:277.20px;width:55.5px">10:25</div>
<div class="t" style="left:664.5px;top:277.20px">IP</div>
<div class="t" style="left:743.5px;top:277.20px">BS1</div>
<div class="t" style="left:314.5px;top:287.80px">Meier, Peter</div>
<div class="t" style="left:413.3px;top:287.80px">00003220</div>
<div class="t c" style="left:605.5px;top:287.80px;width:55.5px">10:25</div>
<div class="t" style="left:664.5px;top:287.80px">Füllung</div>
<div class="t" style="left:743.5px;top:287.80px">BS2</div>
<div class="t" style="left:314.5px;top:298.40px">Irving, John</div>
<div class="t" style="left:413.3px;top:298.40px">00000064</div>
<div class="t" style="left:530px;top:298.40px">DAK Gesundheit > ...</div>
<div class="t c" style="left:605.5px;top:298.40px;width:55.5px">10:55</div>
<div class="t" style="left:664.5px;top:298.40px">IP 5</div>
<div class="t" style="left:743.5px;top:298.40px">BS2</div>
<div class="t" style="left:314.5px;top:309.00px">Carradine, David</div>
<div class="t" style="left:413.3px;top:309.00px">00003229</div>
<div class="t" style="left:530px;top:309.00px">Barmer GEK > Wup...</div>
<div class="t c" style="left:605.5px;top:309.00px;width:55.5px">11:00</div>
<div class="t" style="left:664.5px;top:309.00px">PZR</div>
<div class="t" style="left:743.5px;top:309.00px">BS3</div>
<div class="t" style="left:314.5px;top:319.60px">"Ulli", Glücklich, Ulrike</div>
<div class="t" style="left:413.3px;top:319.60px">00000001</div>
<div class="t c" style="left:459.5px;top:319.60px;width:67px">0009</div>
<div class="t" style="left:530px;top:319.60px">Techniker Krankenk...</div>
<div class="t c" style="left:605.5px;top:319.60px;width:55.5px">11:25</div>
<div class="t" style="left:664.5px;top:319.60px">IP 5</div>
<div class="t" style="left:743.5px;top:319.60px">BS2</div>
<div class="t" style="left:314.5px;top:330.20px">Glass, Madlen</div>
<div class="t c" style="left:605.5px;top:330.20px;width:55.5px">13:00</div>
<div class="t" style="left:664.5px;top:330.20px">Beratung</div>
<div class="t" style="left:743.5px;top:330.20px">BS1</div>
<div class="t" style="left:314.5px;top:340.80px">Huber, Klaus</div>
<div class="t" style="left:413.3px;top:340.80px">00003214</div>
<div class="t c" style="left:605.5px;top:340.80px;width:55.5px">13:10</div>
<div class="t" style="left:664.5px;top:340.80px">Füllung</div>
<div class="t" style="left:743.5px;top:340.80px">BS2</div>
<div style="left:313.5px;top:350.00px;width:504.5px;height:9.7px;background:#e3e3e3"></div>
<div style="left:392px;top:350.00px;width:10.3px;height:9.7px;background:#fff"></div>
<svg style="position:absolute;left:304.8px;top:351.50px" width="8" height="8" viewBox="0 0 8 8"><circle cx="4" cy="4" r="3.3" fill="#c4e6f9" stroke="#6a9ad2" stroke-width="0.6"/><path d="M2.4 3.2 L4 4.9 L5.6 3.2" fill="none" stroke="#2a3a5a" stroke-width="0.8"/></svg>
<div class="t" style="left:314.5px;top:351.40px">Teambesprechung</div>
<div class="t c" style="left:605.5px;top:351.40px;width:55.5px">13:30</div>
<div class="t" style="left:664.5px;top:351.40px">- Serientermin -</div>
<div class="t" style="left:743.5px;top:351.40px">BS3</div>
<div class="t" style="left:314.5px;top:362.00px">Jones, Norah</div>
<div class="t" style="left:413.3px;top:362.00px">00000070</div>
<div class="t" style="left:530px;top:362.00px">PRIVAT</div>
<div class="t c" style="left:605.5px;top:362.00px;width:55.5px">13:35</div>
<div class="t" style="left:664.5px;top:362.00px">IP 5</div>
<div class="t" style="left:743.5px;top:362.00px">BS1</div>
<div class="t" style="left:314.5px;top:372.60px">GOZ-Supra, Klemens</div>
<div class="t" style="left:413.3px;top:372.60px">00002195</div>
<div class="t" style="left:530px;top:372.60px">BERLIN-KÖLNISCHE</div>
<div class="t c" style="left:605.5px;top:372.60px;width:55.5px">14:05</div>
<div class="t" style="left:664.5px;top:372.60px">Aufklärung Implante</div>
<div class="t" style="left:743.5px;top:372.60px">BS1</div>
<div class="t" style="left:314.5px;top:383.20px">Brücke, Martin</div>
<div class="t" style="left:413.3px;top:383.20px">00000018</div>
<div class="t" style="left:530px;top:383.20px">AOK Chemnitz</div>
<div class="t c" style="left:605.5px;top:383.20px;width:55.5px">14:05</div>
<div class="t" style="left:664.5px;top:383.20px">PZR</div>
<div class="t" style="left:743.5px;top:383.20px">BS3</div>
<div class="t" style="left:314.5px;top:393.80px">GOZ-Supra, Gandalf</div>
<div class="t" style="left:413.3px;top:393.80px">00001185</div>
<div class="t" style="left:530px;top:393.80px">Concordia</div>
<div class="t c" style="left:605.5px;top:393.80px;width:55.5px">14:50</div>
<div class="t" style="left:664.5px;top:393.80px">Füllung</div>
<div class="t" style="left:743.5px;top:393.80px">BS2</div>
<div class="t" style="left:314.5px;top:404.40px">Befund, Vorher-Nach...</div>
<div class="t" style="left:413.3px;top:404.40px">00000094</div>
<div class="t" style="left:530px;top:404.40px">KKH > Sachsen</div>
<div class="t c" style="left:605.5px;top:404.40px;width:55.5px">15:05</div>
<div class="t" style="left:664.5px;top:404.40px">PZR</div>
<div class="t" style="left:743.5px;top:404.40px">BS3</div>
<div class="t" style="left:314.5px;top:415.00px">Howard, Rebecca</div>
<div class="t" style="left:413.3px;top:415.00px">00000075</div>
<div class="t c" style="left:459.5px;top:415.00px;width:67px">0001</div>
<div class="t" style="left:530px;top:415.00px">AOK PLUS Sachsen</div>
<div class="t c" style="left:605.5px;top:415.00px;width:55.5px">15:20</div>
<div class="t" style="left:664.5px;top:415.00px">IP</div>
<div class="t" style="left:743.5px;top:415.00px">BS2</div>
<div class="t" style="left:314.5px;top:425.60px">Beutlin, Mia</div>
<div class="t" style="left:413.3px;top:425.60px">00003199</div>
<div class="t" style="left:530px;top:425.60px">AOK Rheinland/Ha...</div>
<div class="t c" style="left:605.5px;top:425.60px;width:55.5px">15:50</div>
<div class="t" style="left:664.5px;top:425.60px">OP Implantate</div>
<div class="t" style="left:743.5px;top:425.60px">BS1</div>
<div style="left:294px;top:532.4px;width:1017px;height:13.6px;background:linear-gradient(#dbe5f2,#e4ecf6 35%,#c6d4e8)"></div>
<div style="left:294px;top:531.6px;width:1017px;height:1px;background:#93a5c0"></div>
<div class="a" style="left:296px;top:534.5px;font-size:8.3px;color:#2a3562">Tageskontrolle Termine</div>
<div class="a" style="left:467.5px;top:534.5px;font-size:8.3px;color:#2a3562">8.2.86.110</div>
<div class="a" style="left:522.5px;top:534.5px;font-size:8.3px;color:#2a3562">Kundennummer: 99999</div>
<div style="left:766px;top:112.5px;width:390px;height:330px;background:#f0f0f0;border:1px solid #adadad;box-shadow:0 0 3px rgba(0,0,0,.2)"></div>
<div style="left:767px;top:113.5px;width:388px;height:16px;background:#fff"></div>
<div class="a" style="left:771.5px;top:116.3px;font-size:6.1px;color:#222">Serienversand von Kurznachrichten (SMS)</div>
<div style="left:771px;top:137px;width:378px;height:174px;border:1px solid #e0e0e0"></div>
<div class="a" style="left:775px;top:132px;background:#f0f0f0;padding:0 2px">Nachricht</div>
<div class="a" style="left:777px;top:142.5px">Senden an:</div>
<div style="left:816px;top:140.5px;width:329px;height:106px;background:#fff;border:1px solid #b4b4b4"></div>
<div style="left:844.9px;top:141.5px;width:1px;height:94px;background:#ececec"></div>
<div style="left:936.7px;top:141.5px;width:1px;height:94px;background:#ececec"></div>
<div style="left:963.8px;top:141.5px;width:1px;height:94px;background:#ececec"></div>
<div style="left:990.8px;top:141.5px;width:1px;height:94px;background:#ececec"></div>
<div style="left:1033.2px;top:141.5px;width:1px;height:94px;background:#ececec"></div>
<div style="left:1065.0px;top:141.5px;width:1px;height:94px;background:#ececec"></div>
<div style="left:1132.0px;top:141.5px;width:1px;height:94px;background:#ececec"></div>
<div style="left:817px;top:164.2px;width:327px;height:1px;background:#f0f0f0"></div>
<div style="left:817px;top:174.8px;width:327px;height:1px;background:#f0f0f0"></div>
<div style="left:817px;top:185.4px;width:327px;height:1px;background:#f0f0f0"></div>
<div style="left:817px;top:196.0px;width:327px;height:1px;background:#f0f0f0"></div>
<div style="left:817px;top:206.6px;width:327px;height:1px;background:#f0f0f0"></div>
<div style="left:817px;top:217.2px;width:327px;height:1px;background:#f0f0f0"></div>
<div style="left:817px;top:227.8px;width:327px;height:1px;background:#f0f0f0"></div>
<div style="left:828px;top:154px;width:316px;height:10px;background:#0b66d6"></div>
<div class="a" style="left:820.4px;top:142.5px;max-width:323.9px;overflow:hidden">Handy</div>
<div class="a" style="left:848.5px;top:142.5px;max-width:295.8px;overflow:hidden">Empfänger</div>
<div class="a" style="left:940.4px;top:142.5px;max-width:203.9px;overflow:hidden">Name</div>
<div class="a" style="left:967.5px;top:142.5px;max-width:176.8px;overflow:hidden">Vorn...</div>
<div class="a" style="left:994.5px;top:142.5px;max-width:149.8px;overflow:hidden">Datum</div>
<div class="a" style="left:1036.7px;top:142.5px;max-width:107.6px;overflow:hidden">Zeit</div>
<div class="a" style="left:1068.7px;top:142.5px;max-width:75.6px;overflow:hidden">Terminart</div>
<div class="a" style="left:1135.7px;top:142.5px;max-width:8.6px;overflow:hidden">Tel</div>
<svg style="position:absolute;left:819.4px;top:156.0px" width="7" height="7" viewBox="0 0 7 7"><rect x="0.35" y="0.35" width="6.3" height="6.3" fill="#fff" stroke="#666" stroke-width="0.7"/><path d="M1.5 3.5 L2.9 5 L5.6 1.7" fill="none" stroke="#333" stroke-width="0.8"/></svg>
<div class="a" style="left:829px;top:154.6px;color:#fff">01...</div>
<div class="a" style="left:848.5px;top:154.6px;color:#fff">Glücklich, Ulrike</div>
<div class="a" style="left:940.4px;top:154.6px;color:#fff">Glüc...</div>
<div class="a" style="left:967.5px;top:154.6px;color:#fff">Ulrike</div>
<div class="a" style="left:994.5px;top:154.6px;color:#fff">21.08.2025</div>
<div class="a" style="left:1036.7px;top:154.6px;color:#fff">08:00</div>
<div class="a" style="left:1068.7px;top:154.6px;color:#fff">Beratung</div>
<svg style="position:absolute;left:819.4px;top:166.5px" width="7" height="7" viewBox="0 0 7 7"><rect x="0.35" y="0.35" width="6.3" height="6.3" fill="#fff" stroke="#666" stroke-width="0.7"/><path d="M1.5 3.5 L2.9 5 L5.6 1.7" fill="none" stroke="#333" stroke-width="0.8"/></svg>
<div class="a" style="left:829px;top:165.1px;color:#222">01...</div>
<div class="a" style="left:848.5px;top:165.1px;color:#222">Glücklich, Ulrike</div>
<div class="a" style="left:940.4px;top:165.1px;color:#222">Glüc...</div>
<div class="a" style="left:967.5px;top:165.1px;color:#222">Ulrike</div>
<div class="a" style="left:994.5px;top:165.1px;color:#222">21.08.2025</div>
<div class="a" style="left:1036.7px;top:165.1px;color:#222">11:25</div>
<div class="a" style="left:1068.7px;top:165.1px;color:#222">IP 5</div>
<div style="left:817px;top:236px;width:327px;height:9.5px;background:#f0f0f0"></div>
<div style="left:826px;top:237px;width:255px;height:7.5px;background:#c9c9c9"></div>
<svg style="position:absolute;left:817px;top:236px" width="328" height="10" viewBox="817 236 328 10"><path d="M822.6 238.6 L820.4 240.8 L822.6 243 M1138.4 238.6 L1140.6 240.8 L1138.4 243" fill="none" stroke="#505050" stroke-width="0.8"/></svg>
<div class="a" style="left:777px;top:266px">Vorschau:</div>
<div style="left:816px;top:264.5px;width:329px;height:43px;background:#f0f0f0;border:1px solid #b0b0b0"></div>
<div class="a" style="left:820px;top:266px">Terminerinnerung: 21.08.2025, 08:00 Uhr. Bei Verhinderung bitte Rückruf 03745 / 782430</div>
<div class="a" style="left:820px;top:274.8px">Ihre KFO-Praxis , gern auch per Mail an info@ivoris.de</div>
<svg style="position:absolute;left:1134px;top:265px" width="10" height="42" viewBox="1134 265 10 42"><path d="M1137 271 l2.2 -2.2 l2.2 2.2 M1137 300.5 l2.2 2.2 l2.2 -2.2" fill="none" stroke="#b4b4b4" stroke-width="0.8"/></svg>
<div style="left:772px;top:324px;width:375px;height:89.5px;background:#fff;border:1px solid #e2e2e2"></div>
<div style="left:804.5px;top:312px;width:40.5px;height:13px;background:#fff;border:1px solid #dcdcdc;border-bottom:none"></div>
<div class="a" style="left:776px;top:313.5px">Vorlagen</div>
<div class="a" style="left:808.8px;top:312.5px">Freier Text</div>
<div style="left:776px;top:328.5px;width:368px;height:47.5px;background:#fff;border:1px solid #9c9c9c"></div>
<div class="a" style="left:779.8px;top:329.8px">Terminerinnerung: $$TERMIN-DATUM$$, $$TERMIN-ZEIT$$ Uhr. Bei Verhinderung bitte Rückruf 03745 / 782430</div>
<div class="a" style="left:779.8px;top:338.6px">Ihre KFO-Praxis , gern auch per Mail an info@ivoris.de</div>
<svg style="position:absolute;left:1133px;top:329px" width="10" height="47" viewBox="1133 329 10 47"><path d="M1136 335.5 l2.2 -2.2 l2.2 2.2 M1136 369 l2.2 2.2 l2.2 -2.2" fill="none" stroke="#b4b4b4" stroke-width="0.8"/></svg>
<svg style="position:absolute;left:777px;top:381.4px" width="7" height="7" viewBox="0 0 7 7"><rect x="0.35" y="0.35" width="6.3" height="6.3" fill="#fff" stroke="#444" stroke-width="0.7"/><path d="M1.5 3.5 L2.9 5 L5.6 1.7" fill="none" stroke="#222" stroke-width="0.8"/></svg>
<div class="a" style="left:785.4px;top:380px">Vorlage für SMS-Versand</div>
<svg style="position:absolute;left:916.7px;top:381.4px" width="7" height="7" viewBox="0 0 7 7"><rect x="0.35" y="0.35" width="6.3" height="6.3" fill="#fff" stroke="#444" stroke-width="0.7"/><path d="M1.5 3.5 L2.9 5 L5.6 1.7" fill="none" stroke="#222" stroke-width="0.8"/></svg>
<div class="a" style="left:925.1px;top:380px">Vorlage für E-Mail-Versand</div>
<div class="a c" style="left:776.7px;top:395.6px;width:38px;height:14.6px;line-height:12.6px;background:#f0f0f0;border:1px solid #999;border-bottom-color:#ccc;border-right-color:#ccc">132</div>
<div class="a c" style="left:847.7px;top:396.2px;width:93.6px;height:13.2px;line-height:11.4px;background:#cfcfcf;border:1px solid #c2c2c2;color:#9a9a9a">Als neue Vorlage speichern</div>
<div class="a c" style="left:949.2px;top:396.2px;width:93.5px;height:13.2px;line-height:11.4px;background:#cfcfcf;border:1px solid #c2c2c2;color:#9a9a9a">Vorlage überschreiben</div>
<div class="a c" style="left:1050px;top:396.2px;width:93.6px;height:13.2px;line-height:11.4px;background:#e1e1e1;border:1px solid #adadad;color:#111">Platzhalter einfügen</div>
<div class="a c" style="left:885.1px;top:421.9px;width:45.4px;height:12.9px;line-height:10.6px;background:#e3e3e3;border:1px solid #b8b8b8;color:#111">Senden</div>
<div class="a c" style="left:937.8px;top:421.9px;width:46.2px;height:12.9px;line-height:10.6px;background:#e3e3e3;border:1.3px solid #0a74d8;color:#111">Beenden</div>
<div class="a c" style="left:991.6px;top:421.9px;width:45px;height:12.9px;line-height:10.6px;background:#e3e3e3;border:1px solid #b8b8b8;color:#111">Hilfe</div>
<div style="left:1159.3px;top:93px;width:1.2px;height:439px;background:#bccbe2"></div>
<div style="left:1160.5px;top:93px;width:134px;height:440px;background:#cfdcee"></div>
<div style="left:1294.5px;top:93px;width:17px;height:440px;background:linear-gradient(90deg,#a3b9da,#7f9fcc 60%,#7b9ccb)"></div>
<div style="left:1209.4px;top:95.5px;width:82.2px;height:21px;background:#e9eff8;border:0.8px solid #b0bae2;border-radius:1px"></div>
<div style="left:1164px;top:119.2px;width:127.6px;height:13px;background:#7b9ccb"></div>
<div style="left:1164px;top:132px;width:127.6px;height:74px;background:#a9bddb"></div>
<div class="a" style="left:1191px;top:119.8px;width:40.3px;height:11.8px;background:#ebebeb;font-size:6.9px;line-height:12px;padding-left:2.2px;color:#3a3a3a">August</div>
<div class="a" style="left:1253.3px;top:119.8px;width:26.7px;height:11.8px;background:#ebebeb;font-size:6.9px;line-height:12px;padding-left:2.2px;color:#3a3a3a">2025</div>
<svg style="position:absolute;left:1164px;top:119px" width="128" height="14" viewBox="1164 119 128 14"><g fill="#3b79c6"><path d="M1181.5 125.7 L1188.3 122 V129.4Z"/><path d="M1241 125.7 L1234.2 122 V129.4Z"/><path d="M1245 125.7 L1251.8 122 V129.4Z"/><path d="M1290.3 125.7 L1283.5 122 V129.4Z"/></g><g fill="none" stroke="#444" stroke-width="0.7"><path d="M1224.3 124.5 l2 2 l2 -2"/><path d="M1273.5 124.5 l2 2 l2 -2"/></g></svg>
<div class="a c" style="left:1180.00px;top:133px;width:15.94px;font-size:7.6px;color:#1a1a1a">Mo</div>
<div class="a c" style="left:1195.94px;top:133px;width:15.94px;font-size:7.6px;color:#1a1a1a">Di</div>
<div class="a c" style="left:1211.88px;top:133px;width:15.94px;font-size:7.6px;color:#1a1a1a">Mi</div>
<div class="a c" style="left:1227.82px;top:133px;width:15.94px;font-size:7.6px;color:#1a1a1a">Do</div>
<div class="a c" style="left:1243.76px;top:133px;width:15.94px;font-size:7.6px;color:#1a1a1a">Fr</div>
<div class="a c" style="left:1259.70px;top:133px;width:15.94px;font-size:7.6px;color:#c8c832">Sa</div>
<div class="a c" style="left:1275.64px;top:133px;width:15.94px;font-size:7.6px;color:#e01010">So</div>
<svg style="position:absolute;left:1164px;top:132px" width="128" height="75" viewBox="1164 132 128 75">
<rect x="1180.0" y="143.0" width="111.58" height="63.0" fill="#e9eff8"/>
<rect x="1227.82" y="174.50" width="15.94" height="10.5" fill="#00e800"/>
<path d="M1180.00 143.0 v63.0 M1195.94 143.0 v63.0 M1211.88 143.0 v63.0 M1227.82 143.0 v63.0 M1243.76 143.0 v63.0 M1259.70 143.0 v63.0 M1275.64 143.0 v63.0 M1291.58 143.0 v63.0 M1180.0 143.00 h111.58 M1180.0 153.50 h111.58 M1180.0 164.00 h111.58 M1180.0 174.50 h111.58 M1180.0 185.00 h111.58 M1180.0 195.50 h111.58 M1180.0 206.00 h111.58" stroke="#b7c7e0" stroke-width="0.7" fill="none"/>
<text x="1172" y="150.00" font-family="Liberation Sans,sans-serif" font-size="5" font-weight="bold" fill="#2a3350" text-anchor="middle">31</text>
<text x="1187.97" y="151.20" font-family="Liberation Sans,sans-serif" font-size="7.8" font-weight="normal" fill="#b4b4b4" text-anchor="middle">28</text>
<text x="1203.91" y="151.20" font-family="Liberation Sans,sans-serif" font-size="7.8" font-weight="normal" fill="#b4b4b4" text-anchor="middle">29</text>
<text x="1219.85" y="151.20" font-family="Liberation Sans,sans-serif" font-size="7.8" font-weight="normal" fill="#b4b4b4" text-anchor="middle">30</text>
<text x="1235.79" y="151.20" font-family="Liberation Sans,sans-serif" font-size="7.8" font-weight="normal" fill="#b4b4b4" text-anchor="middle">31</text>
<text x="1251.73" y="151.20" font-family="Liberation Sans,sans-serif" font-size="7.8" font-weight="bold" fill="#0a0a0a" text-anchor="middle">1</text>
<text x="1267.67" y="151.20" font-family="Liberation Sans,sans-serif" font-size="7.8" font-weight="bold" fill="#a4a41e" text-anchor="middle">2</text>
<text x="1283.61" y="151.20" font-family="Liberation Sans,sans-serif" font-size="7.8" font-weight="bold" fill="#e01010" text-anchor="middle">3</text>
<text x="1172" y="160.50" font-family="Liberation Sans,sans-serif" font-size="5" font-weight="bold" fill="#2a3350" text-anchor="middle">32</text>
<text x="1187.97" y="161.70" font-family="Liberation Sans,sans-serif" font-size="7.8" font-weight="bold" fill="#0a0a0a" text-anchor="middle">4</text>
<text x="1203.91" y="161.70" font-family="Liberation Sans,sans-serif" font-size="7.8" font-weight="bold" fill="#0a0a0a" text-anchor="middle">5</text>
<text x="1219.85" y="161.70" font-family="Liberation Sans,sans-serif" font-size="7.8" font-weight="bold" fill="#0a0a0a" text-anchor="middle">6</text>
<text x="1235.79" y="161.70" font-family="Liberation Sans,sans-serif" font-size="7.8" font-weight="bold" fill="#0a0a0a" text-anchor="middle">7</text>
<text x="1251.73" y="161.70" font-family="Liberation Sans,sans-serif" font-size="7.8" font-weight="bold" fill="#e01010" text-anchor="middle">8</text>
<text x="1267.67" y="161.70" font-family="Liberation Sans,sans-serif" font-size="7.8" font-weight="bold" fill="#a4a41e" text-anchor="middle">9</text>
<text x="1283.61" y="161.70" font-family="Liberation Sans,sans-serif" font-size="7.8" font-weight="bold" fill="#e01010" text-anchor="middle">10</text>
<text x="1172" y="171.00" font-family="Liberation Sans,sans-serif" font-size="5" font-weight="bold" fill="#2a3350" text-anchor="middle">33</text>
<text x="1187.97" y="172.20" font-family="Liberation Sans,sans-serif" font-size="7.8" font-weight="bold" fill="#0a0a0a" text-anchor="middle">11</text>
<text x="1203.91" y="172.20" font-family="Liberation Sans,sans-serif" font-size="7.8" font-weight="bold" fill="#0a0a0a" text-anchor="middle">12</text>
<text x="1219.85" y="172.20" font-family="Liberation Sans,sans-serif" font-size="7.8" font-weight="bold" fill="#0a0a0a" text-anchor="middle">13</text>
<text x="1235.79" y="172.20" font-family="Liberation Sans,sans-serif" font-size="7.8" font-weight="bold" fill="#0a0a0a" text-anchor="middle">14</text>
<text x="1251.73" y="172.20" font-family="Liberation Sans,sans-serif" font-size="7.8" font-weight="bold" fill="#e01010" text-anchor="middle">15</text>
<text x="1267.67" y="172.20" font-family="Liberation Sans,sans-serif" font-size="7.8" font-weight="bold" fill="#a4a41e" text-anchor="middle">16</text>
<text x="1283.61" y="172.20" font-family="Liberation Sans,sans-serif" font-size="7.8" font-weight="bold" fill="#e01010" text-anchor="middle">17</text>
<text x="1172" y="181.50" font-family="Liberation Sans,sans-serif" font-size="5" font-weight="bold" fill="#2a3350" text-anchor="middle">34</text>
<text x="1187.97" y="182.70" font-family="Liberation Sans,sans-serif" font-size="7.8" font-weight="bold" fill="#0a0a0a" text-anchor="middle">18</text>
<text x="1203.91" y="182.70" font-family="Liberation Sans,sans-serif" font-size="7.8" font-weight="bold" fill="#0a0a0a" text-anchor="middle">19</text>
<text x="1219.85" y="182.70" font-family="Liberation Sans,sans-serif" font-size="7.8" font-weight="bold" fill="#0a0a0a" text-anchor="middle">20</text>
<text x="1235.79" y="182.70" font-family="Liberation Sans,sans-serif" font-size="7.8" font-weight="bold" fill="#0a0a0a" text-anchor="middle">21</text>
<text x="1251.73" y="182.70" font-family="Liberation Sans,sans-serif" font-size="7.8" font-weight="bold" fill="#0a0a0a" text-anchor="middle">22</text>
<text x="1267.67" y="182.70" font-family="Liberation Sans,sans-serif" font-size="7.8" font-weight="bold" fill="#a4a41e" text-anchor="middle">23</text>
<text x="1283.61" y="182.70" font-family="Liberation Sans,sans-serif" font-size="7.8" font-weight="bold" fill="#e01010" text-anchor="middle">24</text>
<text x="1172" y="192.00" font-family="Liberation Sans,sans-serif" font-size="5" font-weight="bold" fill="#2a3350" text-anchor="middle">35</text>
<text x="1187.97" y="193.20" font-family="Liberation Sans,sans-serif" font-size="7.8" font-weight="bold" fill="#0a0a0a" text-anchor="middle">25</text>
<text x="1203.91" y="193.20" font-family="Liberation Sans,sans-serif" font-size="7.8" font-weight="bold" fill="#0a0a0a" text-anchor="middle">26</text>
<text x="1219.85" y="193.20" font-family="Liberation Sans,sans-serif" font-size="7.8" font-weight="bold" fill="#0a0a0a" text-anchor="middle">27</text>
<text x="1235.79" y="193.20" font-family="Liberation Sans,sans-serif" font-size="7.8" font-weight="bold" fill="#0a0a0a" text-anchor="middle">28</text>
<text x="1251.73" y="193.20" font-family="Liberation Sans,sans-serif" font-size="7.8" font-weight="bold" fill="#0a0a0a" text-anchor="middle">29</text>
<text x="1267.67" y="193.20" font-family="Liberation Sans,sans-serif" font-size="7.8" font-weight="bold" fill="#a4a41e" text-anchor="middle">30</text>
<text x="1283.61" y="193.20" font-family="Liberation Sans,sans-serif" font-size="7.8" font-weight="bold" fill="#e01010" text-anchor="middle">31</text>
<text x="1172" y="202.50" font-family="Liberation Sans,sans-serif" font-size="5" font-weight="bold" fill="#2a3350" text-anchor="middle">36</text>
<text x="1187.97" y="203.70" font-family="Liberation Sans,sans-serif" font-size="7.8" font-weight="normal" fill="#b4b4b4" text-anchor="middle">1</text>
<text x="1203.91" y="203.70" font-family="Liberation Sans,sans-serif" font-size="7.8" font-weight="normal" fill="#b4b4b4" text-anchor="middle">2</text>
<text x="1219.85" y="203.70" font-family="Liberation Sans,sans-serif" font-size="7.8" font-weight="normal" fill="#b4b4b4" text-anchor="middle">3</text>
<text x="1235.79" y="203.70" font-family="Liberation Sans,sans-serif" font-size="7.8" font-weight="normal" fill="#b4b4b4" text-anchor="middle">4</text>
<text x="1251.73" y="203.70" font-family="Liberation Sans,sans-serif" font-size="7.8" font-weight="normal" fill="#b4b4b4" text-anchor="middle">5</text>
<text x="1267.67" y="203.70" font-family="Liberation Sans,sans-serif" font-size="7.8" font-weight="normal" fill="#b4b4b4" text-anchor="middle">6</text>
<text x="1283.61" y="203.70" font-family="Liberation Sans,sans-serif" font-size="7.8" font-weight="normal" fill="#b4b4b4" text-anchor="middle">7</text>
</svg>
<div class="a" style="left:1164px;top:212px;font-size:8.5px;letter-spacing:-0.22px;color:#1a1a1a">Ansicht:</div>
<div class="a" style="left:1164px;top:226px;width:127.5px;height:13.3px;background:#e2e2e2;border:0.6px solid #b4b4b4;font-size:8.8px;letter-spacing:-0.3px;line-height:12.4px;padding-left:2.5px;color:#1a1a1a">Standard</div>
<svg style="position:absolute;left:1282px;top:229px" width="8" height="8" viewBox="0 0 8 8"><path d="M1.5 3 l2.2 2.2 l2.2 -2.2" fill="none" stroke="#555" stroke-width="0.7"/></svg>
<div style="left:1164px;top:241.6px;width:127.8px;height:134.8px;background:#fff;border:0.7px solid #9fb0ca"></div>
<div style="left:1281px;top:242px;width:1px;height:133px;background:#f0f0f0"></div>
<div style="left:1165px;top:254.5px;width:126px;height:1px;background:#f3f3f3"></div>
<div style="left:1165px;top:265.1px;width:126px;height:1px;background:#f3f3f3"></div>
<div style="left:1165px;top:275.7px;width:126px;height:1px;background:#f3f3f3"></div>
<div style="left:1165px;top:286.3px;width:126px;height:1px;background:#f3f3f3"></div>
<div style="left:1165px;top:296.9px;width:126px;height:1px;background:#f3f3f3"></div>
<div style="left:1165px;top:307.5px;width:126px;height:1px;background:#f3f3f3"></div>
<div style="left:1165px;top:318.1px;width:126px;height:1px;background:#f3f3f3"></div>
<div style="left:1165px;top:328.7px;width:126px;height:1px;background:#f3f3f3"></div>
<div style="left:1165px;top:339.3px;width:126px;height:1px;background:#f3f3f3"></div>
<div style="left:1165px;top:349.9px;width:126px;height:1px;background:#f3f3f3"></div>
<div style="left:1165px;top:360.5px;width:126px;height:1px;background:#f3f3f3"></div>
<div style="left:1165px;top:371.1px;width:126px;height:1px;background:#f3f3f3"></div>
<div class="t" style="left:1168.3px;top:244.2px">Behandlungsplätze</div>
<div style="left:1167.4px;top:256.90px;width:6.6px;height:6.6px;border:0.6px solid #6a6a6a;background:#fff"></div>
<div class="t" style="left:1176.9px;top:255.70px">Behandlung 4</div>
<div style="left:1167.4px;top:267.48px;width:6.6px;height:6.6px;border:0.6px solid #6a6a6a;background:#fff"></div>
<svg style="position:absolute;left:1167.4px;top:267.48px" width="6.6" height="6.6" viewBox="0 0 6.6 6.6"><path d="M1.3 3.3 L2.7 4.8 L5.4 1.5" fill="none" stroke="#333" stroke-width="0.8"/></svg>
<div class="t" style="left:1176.9px;top:266.28px">BS1</div>
<div style="left:1167.4px;top:278.06px;width:6.6px;height:6.6px;border:0.6px solid #6a6a6a;background:#fff"></div>
<svg style="position:absolute;left:1167.4px;top:278.06px" width="6.6" height="6.6" viewBox="0 0 6.6 6.6"><path d="M1.3 3.3 L2.7 4.8 L5.4 1.5" fill="none" stroke="#333" stroke-width="0.8"/></svg>
<div class="t" style="left:1176.9px;top:276.86px">BS2</div>
<div style="left:1167.4px;top:288.64px;width:6.6px;height:6.6px;border:0.6px solid #6a6a6a;background:#fff"></div>
<svg style="position:absolute;left:1167.4px;top:288.64px" width="6.6" height="6.6" viewBox="0 0 6.6 6.6"><path d="M1.3 3.3 L2.7 4.8 L5.4 1.5" fill="none" stroke="#333" stroke-width="0.8"/></svg>
<div class="t" style="left:1176.9px;top:287.44px">BS3</div>
<div style="left:1167.4px;top:299.22px;width:6.6px;height:6.6px;border:0.6px solid #6a6a6a;background:#fff"></div>
<svg style="position:absolute;left:1167.4px;top:299.22px" width="6.6" height="6.6" viewBox="0 0 6.6 6.6"><path d="M1.3 3.3 L2.7 4.8 L5.4 1.5" fill="none" stroke="#333" stroke-width="0.8"/></svg>
<div class="t" style="left:1176.9px;top:298.02px">Labor</div>
<svg style="position:absolute;left:1294px;top:93px" width="18" height="440" viewBox="1294 93 18 440"><defs><linearGradient id="vg" x1="0" y1="0" x2="1" y2="0"><stop offset="0" stop-color="#e3ebf6"/><stop offset="0.5" stop-color="#c3d1e7"/><stop offset="1" stop-color="#9bb2d5"/></linearGradient><linearGradient id="va" x1="0" y1="0" x2="1" y2="0"><stop offset="0" stop-color="#fdf3d8"/><stop offset="0.5" stop-color="#fbdc8c"/><stop offset="1" stop-color="#f9c22e"/></linearGradient></defs><path d="M1294.5 98 L1299 98 L1308.5 107 Q1310 108.5 1310 110.5 L1310 169.5 Q1310 172.5 1307 172.5 L1294.5 172.5Z" fill="url(#va)"/><path d="M1294.5 173 L1299 173 L1308.5 182 Q1310 183.5 1310 185.5 L1310 241.5 Q1310 244.5 1307 244.5 L1294.5 244.5Z" fill="url(#vg)"/><path d="M1294.5 245 L1299 245 L1308.5 254 Q1310 255.5 1310 257.5 L1310 315.5 Q1310 318.5 1307 318.5 L1294.5 318.5Z" fill="url(#vg)"/></svg>
<div class="t m c" style="left:1271.3px;top:131px;width:60px;font-size:7.2px;color:#9a8a5a;transform:rotate(90deg)">Datum</div>
<div class="t m c" style="left:1271.3px;top:200.5px;width:60px;font-size:7.2px;color:#2c3a55;transform:rotate(90deg)">Bestätigung</div>
<div class="t m c" style="left:1271.3px;top:278.5px;width:60px;font-size:7.2px;color:#2c3a55;transform:rotate(90deg)">Behandler</div>
<svg style="position:absolute;left:1240px;top:17px" width="70" height="12" viewBox="1240 17 70 12"><path d="M1246.6 21.7 h5.6" stroke="#b4b4b4" stroke-width="0.7"/><path d="M1270.2 20 h4.6 v4.2 h-4.6Z M1271.4 20 v-1 h4.6 v4.2 h-1.2" fill="none" stroke="#b4b4b4" stroke-width="0.7"/><path d="M1295.2 19.3 l5 5 M1300.2 19.3 l-5 5" stroke="#b4b4b4" stroke-width="0.7"/></svg>
<svg style="position:absolute;left:1209px;top:95px" width="84" height="23" viewBox="1209 95 84 23"><circle cx="1219" cy="102.3" r="2.7" fill="#b8b8b8" stroke="#8a8a8a" stroke-width="0.4"/><path d="M1214.5 111.5 q0 -6 4.5 -6 q4.5 0 4.5 6Z" fill="#a8a8a8" stroke="#888" stroke-width="0.4"/><circle cx="1224" cy="103.3" r="2.6" fill="#c4c4c4" stroke="#8a8a8a" stroke-width="0.4"/><path d="M1219.8 112.6 q0 -6 4.3 -6 q4.3 0 4.3 6Z" fill="#b4b4b4" stroke="#888" stroke-width="0.4"/><path d="M1226.3 109.5 h3 M1227.8 108 v3" stroke="#d8d8d8" stroke-width="1"/><path d="M1243 99.5 h6.5 l1 5 h-8.5Z" fill="#fafafa" stroke="#a0a0a8" stroke-width="0.4"/><path d="M1240.3 105.2 q0 -1 1 -1 h11 q1 0 1 1 v4.3 h-13Z" fill="#d0d0d6" stroke="#7a7a88" stroke-width="0.5"/><path d="M1241.8 108.8 h10 l0.8 3.4 h-11.6Z" fill="#ececf0" stroke="#8a8a98" stroke-width="0.4"/><circle cx="1250.6" cy="102" r="2.6" fill="#30b838" stroke="#1a7a20" stroke-width="0.4"/><path d="M1249.3 102 h2.6 M1250.6 100.7 v2.6" stroke="#eaffea" stroke-width="0.7"/><rect x="1255.2" y="98.2" width="16.6" height="15.2" fill="#f2b266" stroke="#3a6ac8" stroke-width="0.9"/><path d="M1257.5 101.5 q0 -1.5 1.5 -1.5 h7 q1.5 0 1.5 1.5 v5 q0 1.5 -1.5 1.5 h-4.5 l-2.6 2.4 v-2.4 q-1.4 0 -1.4 -1.5Z" fill="#e4e4f6" stroke="#a8a8d0" stroke-width="0.4"/><rect x="1265.6" y="102.3" width="4.6" height="9.6" rx="0.7" fill="#4a4a58" stroke="#222" stroke-width="0.3"/><rect x="1266.5" y="103.4" width="2.8" height="3.4" fill="#48c848"/><circle cx="1282.3" cy="104" r="5" fill="#2a7ad0" stroke="#1a4a98" stroke-width="0.4"/><path d="M1279.5 100.5 q2.5 -1.5 4.5 0.5 q0.5 2.5 -1.5 3 q-2.5 0.5 -3 -3.5Z" fill="#38b048"/><path d="M1275 105.5 h8.6 v5.8 h-8.6Z" fill="#f4f4fc" stroke="#8a8ab8" stroke-width="0.5"/><path d="M1275 105.5 l4.3 3.2 l4.3 -3.2" fill="none" stroke="#8a8ab8" stroke-width="0.5"/></svg>
<div style="left:1002px;top:533.6px;width:26px;height:11.6px;background:#e6edf6"></div>
<div style="left:1058px;top:533.6px;width:26.5px;height:11.6px;background:#e6edf6"></div>
<div style="left:1170px;top:533.6px;width:26.8px;height:11.6px;background:#e6edf6"></div>
<div style="left:1198px;top:533.6px;width:26.6px;height:11.6px;background:#e6edf6"></div>
<div style="left:1226px;top:533.6px;width:27.5px;height:11.6px;background:#e6edf6"></div>
<div style="left:1282.8px;top:533.6px;width:27.4px;height:11.6px;background:#e6edf6"></div>
<div class="a c" style="left:1029.8px;top:534.3px;width:26.6px;height:10.3px;background:#f01a58;color:#fff;font-weight:bold;font-size:6.9px;line-height:10.8px;letter-spacing:-0.45px;text-indent:-0.4px">SYSTEM</div>
<svg style="position:absolute;left:1000px;top:533px" width="312" height="13" viewBox="1000 533 312 13"><circle cx="1015" cy="539.3" r="3.3" fill="#2a6ad0"/><ellipse cx="1015" cy="539.5" rx="6" ry="1.5" fill="none" stroke="#3a3a4a" stroke-width="0.8" transform="rotate(-18 1015 539.5)"/><path d="M1012.5 538 q2 -2 4 -0.5" stroke="#8ab8f0" stroke-width="0.6" fill="none"/><rect x="1065.9" y="534.2" width="10.3" height="10.3" fill="#0c2a78"/><circle cx="1071" cy="539.4" r="3.7" fill="#fff"/><path d="M1068.3 539.4 l1.7 -1.3 v0.8 h2 v-0.8 l1.7 1.3 l-1.7 1.3 v-0.8 h-2 v0.8Z" fill="#0c2a78"/><circle cx="1179.8" cy="536.8" r="2.2" fill="#f0a060" stroke="#b05a20" stroke-width="0.3"/><path d="M1176 544.3 q0 -5 3.8 -5 q3.8 0 3.8 5Z" fill="#e0601a"/><circle cx="1187.8" cy="536.8" r="2.2" fill="#f0a060" stroke="#b05a20" stroke-width="0.3"/><path d="M1184 544.3 q0 -5 3.8 -5 q3.8 0 3.8 5Z" fill="#e0601a"/><path d="M1291.3 536 h9 l-1 8 h-7Z" fill="#dceaf8" stroke="#7a9ac8" stroke-width="0.5"/><path d="M1290.8 536 h10" stroke="#6a8ab8" stroke-width="0.8"/><circle cx="1295.8" cy="540.3" r="2" fill="none" stroke="#28a838" stroke-width="0.9"/></svg>
<div class="a c" style="left:1198px;top:534.4px;width:26.6px;font-size:10.6px;font-weight:bold;color:#5a1668">C</div>
<div class="a c" style="left:1226px;top:534.6px;width:27.5px;font-size:12px;font-weight:bold;color:#f09a20;letter-spacing:0.2px;-webkit-text-stroke:0.3px #c06a08">€€</div>
<svg style="position:absolute;left:294px;top:77px" width="8" height="456" viewBox="294 77 8 456"><path d="M297.6 93.5 v9 M297.6 507.5 v10" stroke="#e8eef8" stroke-width="1" stroke-dasharray="1 1"/><path d="M295 298 l5.5 5.5 l-5.5 5.5" fill="none" stroke="#c8d6ea" stroke-width="0.8"/></svg>
</div>
</div>
</body></html>
